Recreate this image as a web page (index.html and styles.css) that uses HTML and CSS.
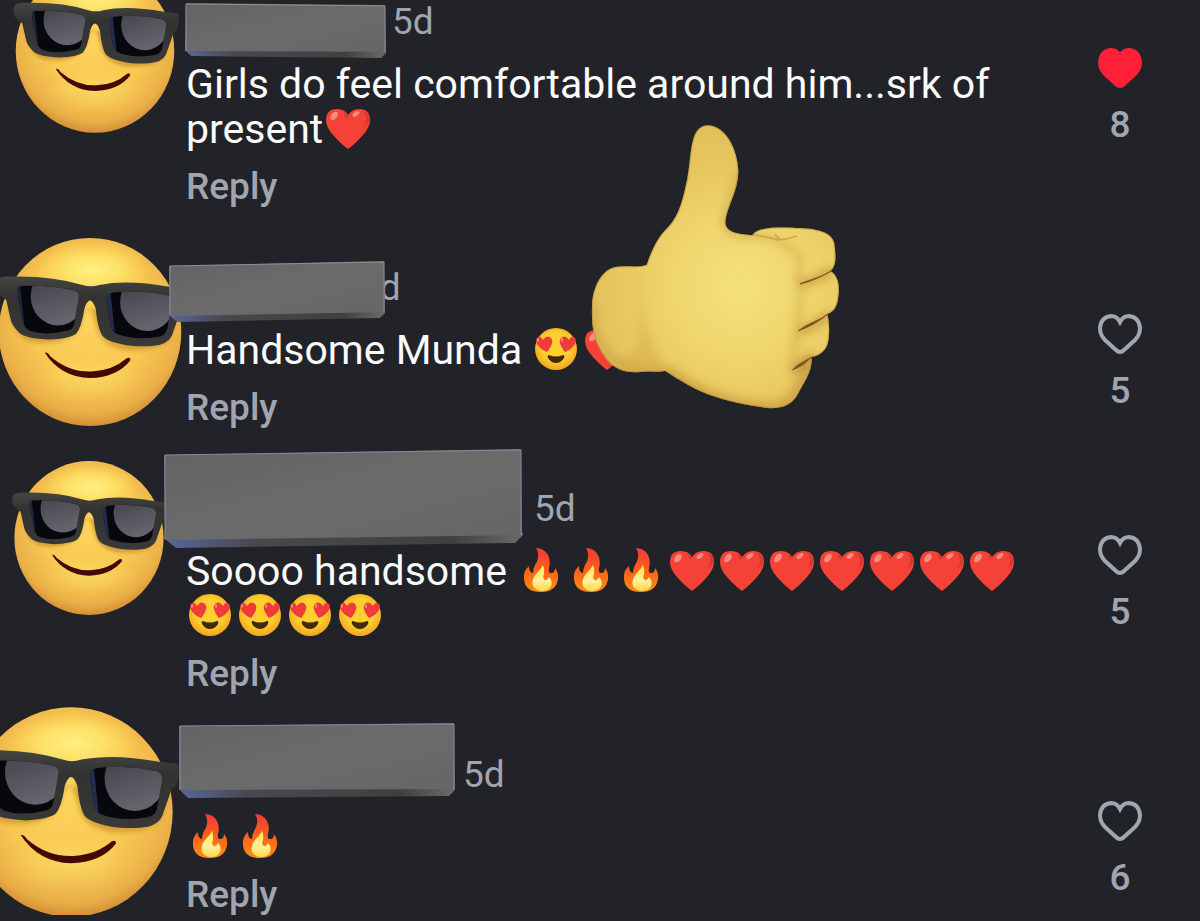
FILE: index.html
```html
<!DOCTYPE html>
<html lang="en">
<head>
  <meta charset="utf-8">
  <title>Comments</title>
  <link rel="stylesheet" href="styles.css">
</head>

<body>
  <!-- shared drawings -->
  <svg class="defs" width="0" height="0" aria-hidden="true">
    <defs>
      <radialGradient id="face-fill" cx="0.5" cy="0.42" r="0.6">
        <stop offset="0" stop-color="#fdd45c"/>
        <stop offset="0.55" stop-color="#f8c852"/>
        <stop offset="0.85" stop-color="#eab048"/>
        <stop offset="1" stop-color="#cf8630"/>
      </radialGradient>
      <radialGradient id="face-shine" cx="0.5" cy="0.5" r="0.5">
        <stop offset="0" stop-color="#fff083"/>
        <stop offset="0.5" stop-color="#ffe66c" stop-opacity="0.8"/>
        <stop offset="1" stop-color="#ffdc58" stop-opacity="0"/>
      </radialGradient>
      <linearGradient id="frame-fill" x1="0" y1="0" x2="0" y2="1">
        <stop offset="0" stop-color="#454543"/>
        <stop offset="0.3" stop-color="#323231"/>
        <stop offset="1" stop-color="#393938"/>
      </linearGradient>
      <linearGradient id="lens-shine" x1="0" y1="0" x2="0.3" y2="1">
        <stop offset="0" stop-color="#3a3a42"/>
        <stop offset="1" stop-color="#64646d"/>
      </linearGradient>
      <linearGradient id="brick-fill" x1="0" y1="0" x2="1" y2="1">
        <stop offset="0" stop-color="#636363"/>
        <stop offset="0.5" stop-color="#6b6b6b"/>
        <stop offset="1" stop-color="#666666"/>
      </linearGradient>
      <linearGradient id="brick-edge" x1="0" y1="0" x2="1" y2="0">
        <stop offset="0" stop-color="#5a659c"/>
        <stop offset="0.25" stop-color="#47494f"/>
        <stop offset="0.8" stop-color="#404040"/>
        <stop offset="1" stop-color="#6a6a6a"/>
      </linearGradient>
      <linearGradient id="fire-fill" x1="0" y1="0" x2="0" y2="1">
        <stop offset="0" stop-color="#f03a3a"/>
        <stop offset="0.45" stop-color="#fb5c1c"/>
        <stop offset="1" stop-color="#ff8f12"/>
      </linearGradient>
      <linearGradient id="fire-core" x1="0" y1="0" x2="0" y2="1">
        <stop offset="0" stop-color="#ffe94a"/>
        <stop offset="0.6" stop-color="#fff09a"/>
        <stop offset="1" stop-color="#ffd84a"/>
      </linearGradient>
      <radialGradient id="love-fill" cx="0.5" cy="0.45" r="0.55">
        <stop offset="0.6" stop-color="#fdcf2f"/>
        <stop offset="1" stop-color="#f2a41f"/>
      </radialGradient>
      <radialGradient id="hand-fill" gradientUnits="userSpaceOnUse" cx="660" cy="530" r="480">
        <stop offset="0" stop-color="#f3e07c"/>
        <stop offset="0.4" stop-color="#f0d76e"/>
        <stop offset="0.75" stop-color="#e8c75f"/>
        <stop offset="1" stop-color="#e2c05a"/>
      </radialGradient>
      <filter id="soft" x="-30%" y="-30%" width="160%" height="160%">
        <feGaussianBlur stdDeviation="12"/>
      </filter>
      <filter id="soft-small" x="-20%" y="-20%" width="140%" height="140%">
        <feGaussianBlur stdDeviation="2"/>
      </filter>
      <clipPath id="left-lens">
        <path d="M-73 -49 Q-40 -50 -17 -44 Q-11 -42 -12 -36 L-17 -8 Q-18 -2 -26 -1 Q-48 4 -63 -1 Q-69 -3 -71 -10 L-77 -42 Q-78 -48 -73 -49Z"/>
      </clipPath>
      <clipPath id="right-lens">
        <path d="M25 -42 Q54 -45 82 -39 Q88 -37 87 -30 L82 -3 Q80 4 73 5 Q50 9 31 3 Q24 1 22 -6 L18 -34 Q18 -41 25 -42Z"/>
      </clipPath>
    </defs>

    <symbol id="cool-face" viewBox="-104 -102 208 204">
      <ellipse rx="97" ry="100" fill="url(#face-fill)"/>
      <ellipse cx="2" cy="-66" rx="62" ry="30" fill="url(#face-shine)"/>
      <ellipse cx="0" cy="50" rx="66" ry="28" fill="url(#face-shine)" opacity="0.3"/>
      <path d="M-87 -30 Q-82 8 -60 11 Q-20 15 -10 -8 Q-2 -42 6 -8 Q10 14 36 19 Q70 22 85 8 L94 -20 Z" fill="#b97a1e" opacity="0.5" filter="url(#soft-small)"/>
      <path d="M-99 -54 Q-97 -60 -84 -59 Q-40 -60 -8 -50 Q1 -47 10 -50 Q40 -56 84 -48 L101 -46 Q104 -44 102 -31 Q101 -25 96 -22 L87 4 Q82 14 66 15 Q46 16 34 13 Q15 9 12 2 Q8 -6 6 -25 Q0 -42 -6 -25 Q-9 -4 -15 2 Q-22 7 -43 8 Q-68 7 -75 1 Q-82 -6 -84 -12 L-89 -34 Q-99 -40 -100 -47Z" fill="url(#frame-fill)"/>
      <g clip-path="url(#left-lens)">
        <rect x="-80" y="-56" width="70" height="64" fill="#07080d"/>
        <path d="M-80 -56 L-75 -56 L-68 8 L-76 8Z" fill="#1d2440"/>
        <ellipse cx="-34" cy="-38" rx="29" ry="31" fill="url(#lens-shine)"/>
      </g>
      <g clip-path="url(#right-lens)">
        <rect x="16" y="-50" width="76" height="62" fill="#07080d"/>
        <path d="M16 -50 L21 -50 L27 8 L20 8Z" fill="#222c4e"/>
        <ellipse cx="61" cy="-32" rx="29" ry="31" fill="url(#lens-shine)"/>
      </g>
      <path d="M-48 22 Q-45 21 -42 26 Q-22 43 2 42 Q24 41 39 28 Q43 26 43 30 Q29 48 0 49 Q-31 48 -48 22Z" fill="#430a04"/>
    </symbol>

    <symbol id="fire" viewBox="0 0 50 50">
      <path d="M19 3 Q27 3 31 10 Q34 16 32 23 Q31 28 34 28 Q38 28 38 23 Q42 28 41 34 Q39 47 24 47 Q8 47 7 34 Q6 26 12 21 Q12 28 16 28 Q16 24 18 20 Q24 11 19 3Z" fill="url(#fire-fill)"/>
      <path d="M26 20 Q24 24 19 29 Q14 35 16 41 Q19 46 25 46 Q32 46 34 41 Q36 36 32 32 Q30 36 28 35 Q25 33 27 29 Q28 24 26 20Z" fill="url(#fire-core)"/>
    </symbol>

    <symbol id="red-heart" viewBox="0 0 50 50">
      <path d="M25 46 Q18 41 10 32 Q3 24 3 17 Q3 6 14 6 Q22 6 25 12 Q29 6 36 6 Q47 6 47 17 Q47 24 40 32 Q32 41 25 46Z" fill="#f44336"/>
      <path d="M40 8 Q46 15 40 24 Q46 21 47 15 Q45 8 40 8Z M21 9 Q24 10 25 14 Q23 16 22 13Z" fill="#c9352d" opacity="0.7"/>
      <ellipse cx="11" cy="13" rx="3" ry="5" transform="rotate(38 11 13)" fill="#ff8a80"/>
      <ellipse cx="33" cy="11" rx="2" ry="4" transform="rotate(55 33 11)" fill="#ff8a80"/>
    </symbol>

    <symbol id="love-face" viewBox="0 0 50 50">
      <circle cx="24" cy="25" r="21" fill="url(#love-fill)"/>
      <path d="M17 31 Q24 34 31 31 Q33 31 32 34 Q29 39 24 39 Q19 39 16 34 Q15 31 17 31Z" fill="#422b0d"/>
      <path d="M15 28 Q8 25 5 20 Q3 15 6 13 Q9 12 11 16 Q14 11 18 13 Q22 16 19 22 Q17 26 15 28Z" fill="#ef3b3a"/>
      <path d="M33 28 Q31 26 29 22 Q26 16 30 13 Q34 11 37 16 Q39 12 42 13 Q45 15 43 20 Q40 25 33 28Z" fill="#ef3b3a"/>
      <ellipse cx="6" cy="16" rx="1" ry="2" fill="#ff8a80"/>
      <ellipse cx="30" cy="16" rx="1" ry="2" fill="#ff8a80"/>
    </symbol>

    <symbol id="like-shape" viewBox="0 0 44 40">
      <path d="M22 38 Q20 38 18 36 L7 26 Q2 21 2 14 Q3 3 13 2 Q19 2 22 8 Q25 2 31 2 Q41 3 42 14 Q42 21 37 26 L26 36 Q24 38 22 38Z"/>
    </symbol>
  </svg>

  <ul class="comments">
    <li class="comment">
      <svg class="avatar avatar-1" role="img" aria-label="Profile picture"><use href="#cool-face"/></svg>
      <div class="body">
        <div class="meta">
          <span class="name name-1">
            <svg class="brick brick-1" viewBox="0 0 202 56">
              <path d="M0 47 L201 49 L201 50 L196 55 L6 53Z" fill="url(#brick-edge)"/>
              <path d="M1 0 L200 2 L201 49 L0 48Z" fill="url(#brick-fill)"/>
              <path d="M1 48 V1 L200 3 V49" fill="none" stroke="#8e8e96"/>
            </svg>
          </span>
          <time>5d</time>
        </div>
        <p class="text">Girls do feel comfortable around him...srk of present<svg class="emoji"><use href="#red-heart"/></svg></p>
        <button type="button" class="reply">Reply</button>
      </div>
      <button type="button" class="like liked" aria-label="Unlike">
        <svg><use href="#like-shape"/></svg>
        <span>8</span>
      </button>
    </li>

    <li class="comment">
      <svg class="avatar avatar-2" role="img" aria-label="Profile picture"><use href="#cool-face"/></svg>
      <div class="body">
        <div class="meta">
          <span class="name name-2">
            <svg class="brick brick-2" viewBox="0 0 217 62">
              <path d="M0 54 L216 50 L216 52 L211 57 L8 61Z" fill="url(#brick-edge)"/>
              <path d="M0 5 L215 0 L216 51 L1 55Z" fill="url(#brick-fill)"/>
              <path d="M1 54 V5 L215 1 V51" fill="none" stroke="#8e8e96"/>
            </svg>
          </span>
          <time>5d</time>
        </div>
        <p class="text">Handsome Munda <svg class="emoji"><use href="#love-face"/></svg><svg class="emoji"><use href="#red-heart"/></svg></p>
        <button type="button" class="reply">Reply</button>
      </div>
      <button type="button" class="like" aria-label="Like">
        <svg><use href="#like-shape"/></svg>
        <span>5</span>
      </button>
      <svg class="thumb" viewBox="0 0 1020 930" role="img" aria-label="Thumbs up">
        <clipPath id="hand-clip">
          <path id="hand" d="M566 46 C620 50 652 120 655 180 C657 240 620 290 616 335 C616 370 660 372 697 375 C715 350 770 352 820 353 C870 355 935 358 943 400 C948 440 950 465 932 483 C960 500 958 540 955 560 C952 595 938 605 922 613 C930 640 930 700 917 715 C905 733 890 738 874 742 C880 780 850 820 835 850 C820 880 795 895 750 895 C690 888 640 878 590 862 C530 845 470 805 436 783 C410 788 385 782 360 786 C310 790 275 775 250 735 C220 690 214 650 216 585 C218 530 245 480 285 471 C320 465 350 475 380 464 C395 420 415 380 436 360 C480 320 490 260 502 205 C512 150 510 110 524 75 C533 55 548 45 566 46Z"/>
        </clipPath>
        <use href="#hand" fill="url(#hand-fill)"/>
        <g clip-path="url(#hand-clip)">
          <path d="M380 464 C350 560 370 680 440 783 C380 800 300 790 290 760 C400 740 340 560 380 464Z" fill="#c99d38" opacity="0.3" filter="url(#soft)"/>
          <path d="M655 180 C657 240 620 290 616 335 C616 370 660 372 700 380" fill="none" stroke="#c79c40" stroke-width="26" opacity="0.5" filter="url(#soft)"/>
          <path d="M436 783 C530 845 620 890 750 895 C820 895 840 840 874 742" fill="none" stroke="#bf9038" stroke-width="36" opacity="0.6" filter="url(#soft)"/>
          <path d="M216 585 C214 690 260 800 436 783" fill="none" stroke="#c2963f" stroke-width="26" opacity="0.5" filter="url(#soft)"/>
          <path d="M700 372 C760 390 815 400 835 440 C850 480 820 500 840 530 C845 590 830 630 835 665 C815 710 830 750 815 785" fill="none" stroke="#cfa445" stroke-width="20" opacity="0.5" filter="url(#soft)"/>
          <path d="M840 518 C870 518 910 500 934 480 M836 662 C865 658 905 635 926 610 M818 780 C840 775 860 752 878 740" fill="none" stroke="#a97427" stroke-width="22" opacity="0.55" filter="url(#soft)"/>
          <path d="M840 522 C865 510 910 500 934 482 Q890 510 840 522Z M836 662 C860 640 900 632 924 612 Q885 645 836 662Z M818 780 C830 762 855 755 876 740 Q850 768 818 780Z" fill="#82551d" stroke="#82551d" stroke-width="3"/>
          <path d="M697 375 Q740 378 775 390 Q805 388 830 378 M765 373 L780 389" fill="none" stroke="#b98c37" stroke-width="5" opacity="0.6"/>
          <use href="#hand" fill="none" stroke="#a97c31" stroke-width="6" opacity="0.45"/>
        </g>
      </svg>
    </li>

    <li class="comment">
      <svg class="avatar avatar-3" role="img" aria-label="Profile picture"><use href="#cool-face"/></svg>
      <div class="body">
        <div class="meta">
          <span class="name name-3">
            <svg class="brick brick-3" viewBox="0 0 360 100">
              <path d="M1 90 L359 84 L359 86 L351 94 L12 99Z" fill="url(#brick-edge)"/>
              <path d="M0 6 L357 0 L358 86 L1 91Z" fill="url(#brick-fill)"/>
              <path d="M1 90 V6 L357 1 V86" fill="none" stroke="#8589a0"/>
            </svg>
          </span>
          <time>5d</time>
        </div>
        <p class="text">Soooo handsome <svg class="emoji"><use href="#fire"/></svg><svg class="emoji"><use href="#fire"/></svg><svg class="emoji"><use href="#fire"/></svg><svg class="emoji"><use href="#red-heart"/></svg><svg class="emoji"><use href="#red-heart"/></svg><svg class="emoji"><use href="#red-heart"/></svg><svg class="emoji"><use href="#red-heart"/></svg><svg class="emoji"><use href="#red-heart"/></svg><svg class="emoji"><use href="#red-heart"/></svg><svg class="emoji"><use href="#red-heart"/></svg> <svg class="emoji"><use href="#love-face"/></svg><svg class="emoji"><use href="#love-face"/></svg><svg class="emoji"><use href="#love-face"/></svg><svg class="emoji"><use href="#love-face"/></svg></p>
        <button type="button" class="reply">Reply</button>
      </div>
      <button type="button" class="like" aria-label="Like">
        <svg><use href="#like-shape"/></svg>
        <span>5</span>
      </button>
    </li>

    <li class="comment">
      <svg class="avatar avatar-4" role="img" aria-label="Profile picture"><use href="#cool-face"/></svg>
      <div class="body">
        <div class="meta">
          <span class="name name-4">
            <svg class="brick brick-4" viewBox="0 0 278 76">
              <path d="M0 66 L276 64 L276 67 L270 73 L9 75Z" fill="url(#brick-edge)"/>
              <path d="M0 3 L275 0 L276 66 L0 67Z" fill="url(#brick-fill)"/>
              <path d="M1 66 V3 L275 1 V66" fill="none" stroke="#8589a0"/>
            </svg>
          </span>
          <time>5d</time>
        </div>
        <p class="text"><svg class="emoji"><use href="#fire"/></svg><svg class="emoji"><use href="#fire"/></svg></p>
        <button type="button" class="reply">Reply</button>
      </div>
      <button type="button" class="like" aria-label="Like">
        <svg><use href="#like-shape"/></svg>
        <span>6</span>
      </button>
    </li>
  </ul>
</body>
</html>
```

FILE: styles.css
```css
body {
  margin: 0;
  background-color: #212328;
  color: #fafafb;
  font-family: Roboto, sans-serif;
  overflow-x: hidden;
}

.defs {
  position: absolute;
}

.comments {
  list-style: none;
  margin: 0;
  padding: 0;
  display: flex;
  flex-direction: column;
  gap: 59px;
}

.comment {
  position: relative;
  display: grid;
  grid-template-columns: minmax(0, 1fr) 160px;
  padding-left: 186px;
}

.meta {
  display: flex;
  height: 44px;
  margin-bottom: 18px;
  line-height: 44px;
}

.meta time {
  font-size: 37px;
  color: #a0a5b0;
}

.text {
  margin: 0 0 15px;
  font-size: 41px;
  line-height: 45px;
}

.emoji {
  width: 50px;
  height: 50px;
  margin: -10px 0;
  vertical-align: 0;
}

button {
  padding: 0;
  border: none;
  background: none;
  color: #a0a5b0;
  font-family: inherit;
  cursor: pointer;
}

.reply {
  display: block;
  font-size: 37px;
  font-weight: 500;
  line-height: 40px;
}

.like {
  display: flex;
  flex-direction: column;
  align-items: center;
  align-self: start;
  gap: 17px;
  padding-top: 48px;
  font-size: 37px;
  font-weight: 500;
  line-height: 40px;
}

.like svg {
  width: 44px;
  height: 40px;
  fill: none;
  stroke: #a0a5b0;
  stroke-width: 4px;
}

.like.liked svg {
  fill: #ff2038;
  stroke: #ff2038;
}

/* stickers lying over the pictures and names */
.name {
  position: relative;
}

.name-1 { width: 206px; }
.name-2 { width: 173px; }
.name-3 { width: 348px; }
.name-4 { width: 277px; }

.avatar,
.brick,
.thumb {
  position: absolute;
}

.avatar-1 {
  left: 10px;
  top: -33px;
  width: 170px;
  height: 168px;
}

.avatar-2 {
  left: -8px;
  top: -30px;
  width: 196px;
  height: 192px;
}

.avatar-3 {
  left: 9px;
  top: -28px;
  width: 160px;
  height: 158px;
}

.avatar-4 {
  left: -38px;
  top: -48px;
  width: 218px;
  height: 214px;
}

.brick-1 {
  left: -1px;
  top: 3px;
  width: 202px;
}

.brick-2 {
  left: -17px;
  top: -5px;
  width: 217px;
}

.brick-3 {
  left: -22px;
  top: -38px;
  width: 360px;
}

.brick-4 {
  left: -7px;
  top: -30px;
  width: 278px;
}

.thumb {
  left: 520px;
  top: -156px;
  width: 340px;
  height: 310px;
}
```
